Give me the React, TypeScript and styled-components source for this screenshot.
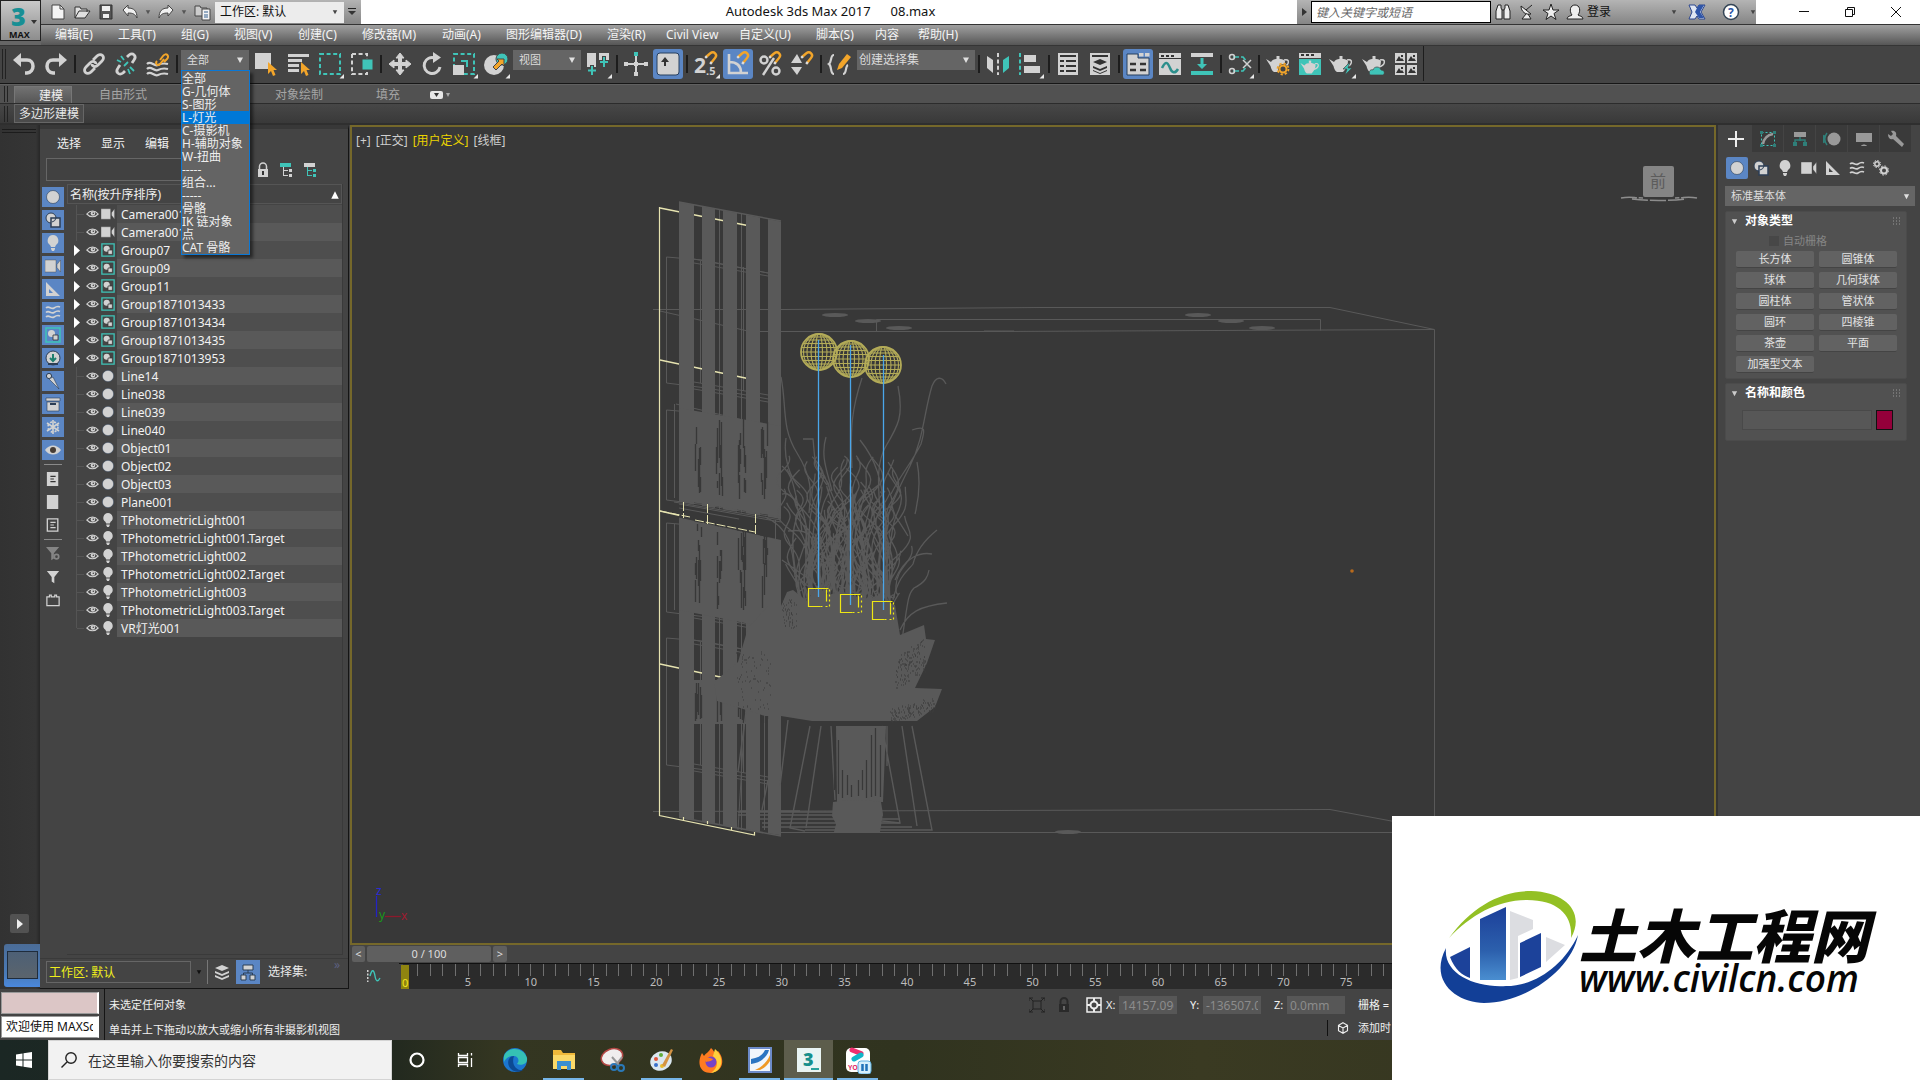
import React from "react";
import styled, { createGlobalStyle, css } from "styled-components";

const L = "#d2d2d2";
const T = "#3fc4b8";
const O = "#f2a52a";
const WIRE = "#595959";
const CREAM = "#e6e3b0";

const Global = createGlobalStyle`
  *, *::before, *::after { box-sizing: border-box; }
  html, body { margin: 0; padding: 0; }
  body {
    background: #444;
    color: #e8e8e8;
    font-family: "Noto Sans", "Noto Sans CJK SC", sans-serif;
    font-size: 12px;
    line-height: 16px;
    overflow: hidden;
  }
  button, input, select { font: inherit; color: inherit; margin: 0; padding: 0; border: 0; border-radius: 0; background: none; outline: none; }
  ul { list-style: none; margin: 0; padding: 0; }
  svg { display: block; flex: none; }
`;

const Page = styled.div`
  height: 100vh;
  display: flex;
  flex-direction: column;
  overflow: hidden;
  position: relative;
`;

/* ---------- window header ---------- */
const Header = styled.header`
  flex: none;
  display: grid;
  grid-template-columns: 41px 1fr;
  grid-template-rows: 24px 21px;
`;
const AppButton = styled.button`
  grid-row: 1 / 3;
  height: 41px;
  border: 1px solid #222;
  background: linear-gradient(#c9c9c9, #8d8d8d);
  z-index: 1;
`;
const TitleBar = styled.div`
  display: flex;
  background: #fff;
  color: #111;
`;
const QuickBar = styled.div`
  width: 320px;
  display: flex;
  align-items: center;
  padding-left: 5px;
  background: linear-gradient(#b4b4b4, #858585);
`;
const QuickButton = styled.button<{ $w?: number }>`
  width: ${(p) => p.$w ?? 24}px;
  height: 22px;
  display: grid;
  place-items: center;
`;
const TitleText = styled.h1`
  flex: 1;
  margin: 0;
  display: flex;
  justify-content: center;
  gap: 20px;
  padding-left: 3px;
  font-size: 13px;
  font-weight: 400;
  line-height: 22px;
`;
const InfoCenter = styled.div`
  width: 459px;
  display: flex;
  align-items: center;
  background: linear-gradient(#b4b4b4, #858585);
`;
const KeywordInput = styled.input`
  width: 180px;
  height: 22px;
  padding: 0 4px;
  border: 1px solid #000;
  background: #fff;
  font-style: italic;
  &::placeholder { color: #666; opacity: 1; }
`;
const SignIn = styled.button`
  width: 79px;
  text-align: left;
`;
const WindowButtons = styled.div`
  width: 164px;
  display: flex;
  padding-left: 25px;
`;
const WindowButton = styled.button`
  width: 46px;
  display: grid;
  place-items: center;
`;
const MenuBar = styled.nav`
  display: flex;
  align-items: center;
  padding-left: 14px;
  gap: 24px;
  border-top: 1px solid #333;
  background: linear-gradient(#a0a0a0, #565656);
  box-shadow: -41px 0 0 #666;
`;
const MenuButton = styled.button<{ $w: number }>`
  width: ${(p) => p.$w}px;
  height: 20px;
  text-align: left;
  white-space: nowrap;
  color: #f4f4f4;
`;

/* ---------- toolbars ---------- */
const Toolbar = styled.div`
  flex: none;
  height: 39px;
  display: flex;
  align-items: center;
  padding-bottom: 2px;
  background: #444;
  border-top: 1px solid #353535;
  border-bottom: 1px solid #161616;
`;
const Grip = styled.span`
  width: 4px;
  height: 30px;
  margin: 0 2px;
  border: solid #222;
  border-width: 0 1px;
`;
const ToolButton = styled.button<{ $on?: boolean }>`
  width: 30px;
  height: 30px;
  margin: 0 1px;
  border-radius: 3px;
  ${(p) => p.$on && css`background: #5b86c4;`}
`;
const Divider = styled.span`
  width: 2px;
  height: 18px;
  margin: 0 2px;
  background: #1d1d1d;
`;
const ToolbarEnd = styled.span`
  width: 1px;
  align-self: stretch;
  margin-left: 1px;
  background: #1d1d1d;
`;
const SelectWrap = styled.div<{ $w: number }>`
  width: ${(p) => p.$w}px;
  height: 20px;
  margin: 4px 1px 0 1px;
  align-self: flex-start;
  display: grid;
  grid-template-columns: 1fr 18px;
  align-items: center;
  position: relative;
  background: #656565;
  select {
    grid-area: 1 / 1 / 2 / 3;
    width: 100%;
    height: 20px;
    padding-left: 6px;
    appearance: none;
    font-size: 11px;
    color: #dcdcdc;
  }
  > svg { grid-area: 1 / 2; pointer-events: none; justify-self: center; }
`;
const FilterList = styled.ul`
  position: absolute;
  z-index: 5;
  top: 20px;
  left: 0;
  width: 69px;
  padding-top: 1px;
  border: 1px solid #0a78d6;
  background: #646464;
  box-shadow: 3px 3px 3px rgba(0, 0, 0, 0.5);
`;
const FilterOption = styled.li<{ $on?: boolean }>`
  height: 13px;
  line-height: 13px;
  white-space: nowrap;
  color: #eee;
  background: ${(p) => (p.$on ? "#0078d7" : "transparent")};
`;

const RibbonTabs = styled.div`
  flex: none;
  height: 20px;
  display: flex;
  align-items: flex-end;
  padding-left: 2px;
  background: #515151;
  border-top: 1px solid #606060;
  border-bottom: 1px solid #2c2c2c;
`;
const RibbonTab = styled.button<{ $on?: boolean; $w: number }>`
  width: ${(p) => p.$w}px;
  height: 17px;
  padding-top: 1px;
  line-height: 16px;
  color: ${(p) => (p.$on ? "#eee" : "#a5a5a5")};
  ${(p) => p.$on && css`
    padding-left: 16px;
    background: linear-gradient(#727272, #565656);
    border: solid #777;
    border-width: 1px 1px 0;
  `}
`;
const RibbonPanel = styled.div`
  flex: none;
  height: 19px;
  display: flex;
  padding-left: 2px;
  background: linear-gradient(#474747, #393939);
`;
const RibbonButton = styled.button`
  width: 70px;
  height: 19px;
  padding-top: 1px;
  line-height: 16px;
  border: 1px solid #666;
  background: #4b4b4b;
`;

/* ---------- work area ---------- */
const Work = styled.main`
  flex: 1;
  min-height: 0;
  display: grid;
  grid-template-columns: 40px 309px minmax(0, 1fr) 204px;
  padding-top: 2px;
  background: #2f2f2f;
`;
const Strip = styled.aside`
  display: flex;
  flex-direction: column;
  padding: 4px 0 2px;
  background: linear-gradient(90deg, #323232, #353535 90%, #272727);
`;
const StripGrip = styled.span`
  height: 4px;
  margin: 0 4px auto 2px;
  border: solid #1c1c1c;
  border-width: 1px 0;
`;
const StripPlay = styled.button`
  width: 19px;
  height: 19px;
  margin: 0 0 11px 10px;
  display: grid;
  place-items: center;
  border-radius: 2px;
  background: #525252;
`;
const LayoutTab = styled.button`
  width: 36px;
  height: 43px;
  margin-left: 4px;
  padding: 7px 2px 8px 3px;
  border-radius: 3px 0 0 3px;
  background: linear-gradient(#4b6c97, #4a7bb8 70%, #4a88dd);
  span { display: block; height: 100%; border: 1px solid #1f2c3c; background: linear-gradient(#4d6076, #5b646c); }
`;

const Explorer = styled.section`
  display: flex;
  flex-direction: column;
  min-height: 0;
  background: #444;
  border-top: 4px solid #383838;
  border-right: 1px solid #151515;
`;
const ExplorerMenu = styled.div`
  height: 29px;
  display: flex;
  align-items: center;
  gap: 20px;
  padding-left: 17px;
  button { color: #f0f0f0; }
`;
const ExplorerSearch = styled.div`
  height: 23px;
  display: flex;
  align-items: center;
  gap: 8px;
  padding-left: 6px;
  input { width: 199px; height: 23px; margin-right: 2px; padding: 0 4px; border: 1px solid #666; background: #414141; }
  button { width: 16px; height: 16px; }
`;
const ExplorerBody = styled.div`
  flex: 1;
  min-height: 0;
  display: flex;
  padding: 3px 5px 0 2px;
`;
const FilterColumn = styled.div`
  width: 25px;
  display: flex;
  flex-direction: column;
  gap: 3px;
  padding-top: 3px;
  hr { width: 18px; margin: 1px 0 1px 2px; border: 0; border-top: 1px solid #8a8a8a; }
`;
const FilterButton = styled.button<{ $on?: boolean }>`
  width: 22px;
  height: 20px;
  display: grid;
  place-items: center;
  background: ${(p) => (p.$on ? "#5b86c4" : "transparent")};
`;
const SceneTree = styled.div`
  flex: 1;
  min-width: 0;
  margin-bottom: 3px;
  border: solid #3a3a3a;
  border-width: 0 1px 1px 0;
`;
const TreeHeader = styled.button`
  width: 100%;
  height: 20px;
  margin-bottom: 1px;
  display: flex;
  align-items: center;
  justify-content: space-between;
  padding: 1px 1px 0 2px;
  border: 1px solid #555;
  color: #f0f0f0;
`;
const TreeRow = styled.li`
  height: 18px;
  display: grid;
  grid-template-columns: 19px 15px 16px 1fr;
  align-items: center;
  span { height: 18px; padding: 1px 0 0 4px; line-height: 17px; background: #4e4e4e; color: #f2f2f2; white-space: nowrap; }
  &:nth-child(even) span { background: #595959; }
`;
const ExplorerFoot = styled.div`
  height: 31px;
  display: flex;
  align-items: center;
  padding: 0 8px 4px 6px;
  border-top: 1px solid #3a3a3a;
  border-bottom: 1px solid #151515;
`;
const LayerCombo = styled.input`
  width: 145px;
  height: 22px;
  padding: 0 2px;
  border: 1px solid #666;
  color: #f0ee1c;
`;
const FootButton = styled.button<{ $w: number; $on?: boolean }>`
  width: ${(p) => p.$w}px;
  height: 24px;
  display: grid;
  place-items: center;
  background: ${(p) => (p.$on ? "#5b86c4" : "transparent")};
`;
const FootRule = styled.span`
  width: 1px;
  height: 24px;
  background: #777;
`;
const FootLabel = styled.span`
  margin-left: 8px;
`;
const FootMore = styled.span`
  margin-left: auto;
  align-self: flex-start;
  line-height: 12px;
  color: #5c6080;
`;

const Stage = styled.section`
  display: flex;
  flex-direction: column;
  min-width: 0;
  min-height: 0;
  padding-left: 1px;
  background: #444;
`;
const Viewport = styled.div`
  flex: 1;
  min-height: 0;
  display: grid;
  border: 2px solid #75682a;
  background: #383838;
  > * { grid-area: 1 / 1; min-height: 0; min-width: 0; }
  svg { width: 100%; height: 100%; }
`;
const ViewportLabels = styled.div`
  display: flex;
  gap: 5px;
  padding: 6px 4px;
  align-self: start;
  z-index: 1;
`;
const ViewLabel = styled.button<{ $gold?: boolean }>`
  height: 16px;
  color: ${(p) => (p.$gold ? "#ebd400" : "#cfcfcf")};
`;
const SliderRow = styled.div`
  height: 18px;
  display: flex;
  gap: 2px;
  padding: 1px 2px 0;
`;
const SliderButton = styled.button<{ $w: number }>`
  width: ${(p) => p.$w}px;
  height: 16px;
  line-height: 16px;
  border-radius: 2px;
  background: #5f5f5f;
  color: #ddd;
  font-size: 11px;
`;
const TrackRow = styled.div`
  height: 26px;
  display: grid;
  grid-template-columns: 49px 1fr;
  align-items: center;
  > svg { justify-self: center; }
`;
const Track = styled.div`
  height: 26px;
  display: flex;
  padding-right: 49px;
  border-top: 1px solid #111;
  background: linear-gradient(90deg, #444 4px, #2b2b2b 4px);
`;
const Frame = styled.div<{ $major?: boolean }>`
  flex: 1 1 0;
  min-width: 0;
  display: flex;
  flex-direction: column;
  align-items: center;
  color: #bdbdbd;
  font-size: 11px;
  line-height: 12px;
  &::before { content: ""; width: 1px; height: 12px; flex: none; background: #707070; }
`;
const FrameZero = styled.div`
  flex: 1 1 0;
  display: flex;
  justify-content: center;
  min-width: 0;
  span { width: 8px; height: 24px; margin-top: 1px; padding-top: 12px; background: #8f8410; color: #f2e620; font-size: 11px; line-height: 12px; text-align: center; }
`;

/* ---------- command panel ---------- */
const Command = styled.aside`
  display: flex;
  flex-direction: column;
  border-left: 2px solid #333;
  padding-left: 2px;
  background: #444;
`;
const CommandTabs = styled.div`
  height: 27px;
  display: flex;
`;
const CommandTab = styled.button<{ $on?: boolean }>`
  width: 32px;
  display: grid;
  place-items: center;
  border-right: 1px solid #444;
  background: ${(p) => (p.$on ? "#444" : "#3a3a3a")};
`;
const Categories = styled.div`
  display: flex;
  gap: 2px;
  padding: 5px 0 7px 6px;
`;
const CategoryButton = styled.button<{ $on?: boolean }>`
  width: 22px;
  height: 22px;
  display: grid;
  place-items: center;
  border-radius: 2px;
  background: ${(p) => (p.$on ? "#5b86c4" : "transparent")};
`;
const PanelSelect = styled(SelectWrap)`
  width: auto;
  margin: 0 5px 5px 5px;
  align-self: stretch;
`;
const Rollout = styled.section`
  margin: 0 13px 4px 5px;
  padding-bottom: 5px;
  border-radius: 2px;
  background: #515151;
  border: 1px solid #4b4b4b;
`;
const RolloutTitle = styled.h2`
  height: 18px;
  margin: 0;
  display: flex;
  align-items: center;
  gap: 7px;
  padding: 0 6px 0 5px;
  font-size: 12px;
  line-height: 18px;
  color: #fff;
  svg:last-child { margin-left: auto; }
`;
const AutoGrid = styled.label`
  height: 21px;
  display: flex;
  align-items: center;
  gap: 4px;
  padding-left: 43px;
  font-size: 11px;
  color: #858585;
  input { appearance: none; width: 10px; height: 10px; background: #474747; }
`;
const ObjectGrid = styled.div`
  display: grid;
  grid-template-columns: 1fr 1fr;
  gap: 4px 5px;
  padding: 0 9px 0 10px;
`;
const ObjectButton = styled.button`
  height: 17px;
  border-radius: 2px;
  border-bottom: 1px solid #444;
  background: #626262;
  font-size: 11px;
  line-height: 16px;
  color: #e2e2e2;
`;
const NameRow = styled.div`
  display: flex;
  gap: 4px;
  padding: 8px 13px 5px 16px;
  input { flex: 1; min-width: 0; height: 20px; padding: 0 4px; border: 1px solid #494949; background: #575757; }
  button { width: 17px; height: 20px; border: 1px solid #111; background: #94003a; }
`;

/* ---------- status bar ---------- */
const Status = styled.footer`
  flex: none;
  height: 51px;
  display: grid;
  grid-template-columns: 105px minmax(0, 1fr) 364px 528px;
  background: #444;
  font-size: 11px;
`;
const Listener = styled.div`
  display: flex;
  flex-direction: column;
  gap: 2px;
  padding: 3px 5px 2px 1px;
  border-right: 1px solid #151515;
  input { width: 98px; height: 22px; padding: 0 4px 2px; border: solid #999; border-width: 1px 2px 1px 1px; border-right-color: #fff; background: #dcc6c6; color: #111; font-size: 12px; }
  input + input { background: #fff; }
`;
const Prompts = styled.div`
  display: flex;
  flex-direction: column;
  gap: 9px;
  padding: 8px 0 0 4px;
  color: #f0f0f0;
`;
const Coords = styled.div`
  display: grid;
  grid-template-rows: 24px 16px;
  row-gap: 3px;
  padding-top: 4px;
`;
const CoordLine = styled.div`
  display: flex;
  align-items: center;
  white-space: nowrap;
  color: #f0f0f0;
`;
const CoordButton = styled.button<{ $w: number }>`
  width: ${(p) => p.$w}px;
  flex: none;
  height: 24px;
  display: grid;
  place-items: center;
`;
const CoordField = styled.label`
  flex: none;
  width: 84px;
  display: flex;
  align-items: center;
  gap: 4px;
  input { width: 58px; height: 18px; padding: 0 3px; background: #575757; color: #8c8c8c; font-size: 12px; }
  span { width: 9px; }
`;
const TimeTag = styled(CoordLine)`
  justify-content: flex-end;
  gap: 9px;
  padding-right: 1px;
  span:first-child { width: 1px; height: 16px; background: #111; }
`;

/* ---------- taskbar ---------- */
const Taskbar = styled.nav`
  flex: none;
  height: 40px;
  display: flex;
  background: linear-gradient(90deg, #1b2724 0, #22291f 392px, #343621 500px, #30331f 900px, #3a3a22 1200px, #2f321f);
`;
const StartButton = styled.button`
  width: 48px;
  display: grid;
  place-items: center;
`;
const TaskSearch = styled.label`
  width: 344px;
  display: flex;
  align-items: center;
  gap: 11px;
  padding-left: 12px;
  background: #f2f2f2;
  border: 1px solid #d4d4d4;
  input { flex: 1; min-width: 0; height: 24px; font-size: 14px; }
  input::placeholder { color: #333; opacity: 1; }
`;
const TaskButton = styled.button<{ $open?: boolean; $on?: boolean }>`
  width: 49px;
  height: 40px;
  display: grid;
  place-items: center;
  position: relative;
  background: ${(p) => (p.$on ? "#5d5d4c" : "transparent")};
  &::after {
    content: "";
    position: absolute;
    left: ${(p) => (p.$on ? 0 : 4)}px;
    right: ${(p) => (p.$on ? 0 : 4)}px;
    bottom: 0;
    height: 2px;
    background: ${(p) => (p.$open ? "#76b5e8" : "transparent")};
  }
`;

/* ---------- site mark over the corner ---------- */
const SiteMark = styled.a`
  position: absolute;
  right: 0;
  bottom: 0;
  z-index: 10;
  width: 528px;
  height: 264px;
  display: flex;
  align-items: center;
  padding: 0 0 2px 47px;
  background: #fff;
  color: #060606;
  text-decoration: none;
  white-space: nowrap;
`;
const SiteWords = styled.span`
  display: flex;
  flex-direction: column;
  padding-top: 8px;
  font-style: italic;
  strong { font-family: "Noto Sans CJK SC", sans-serif; font-size: 58px; line-height: 54px; font-weight: 900; }
  em { font-family: "Open Sans", "Noto Sans", sans-serif; font-size: 37px; line-height: 36px; font-weight: 600; }
`;

/* ---------- glyphs ---------- */
type GlyphProps = { s?: number; h?: number; vb?: string; children: React.ReactNode };
const G = ({ s = 30, h, vb = "-15 -15 30 30", children }: GlyphProps) => (
  <svg width={s} height={h ?? s} viewBox={vb} fill="none" aria-hidden="true">{children}</svg>
);
const Down = ({ c = "#e0e0e0", s = 8 }: { c?: string; s?: number }) => (
  <G s={s} vb="0 0 8 8"><path d="M1 1.5h6L4 7z" fill={c} /></G>
);
const Fly = () => <path d="M14 10v4.500H9.500z" fill="#e8e8e8" />;
const Cursor = ({ x = 0, y = 0 }) => (
  <path transform={`translate(${x} ${y})`} d="M0 0v12l3-3 2 5 2.500-1L5.500 8H9z" fill={O} />
);
const Magnet = ({ x = 0, y = 0 }) => (
  <g transform={`translate(${x} ${y})`}>
    <path d="M0 5l4-3.500c4-3 8 1 5 4.500L5 11" stroke={O} strokeWidth="2.400" />
    <path d="M-.8 5.800l1.700-1.500M4.200 12l1.500-2" stroke="#ddd" strokeWidth="2.400" />
  </g>
);
const Pot = ({ x = 0, y = 0, c = L }: { x?: number; y?: number; c?: string }) => (
  <g transform={`translate(${x} ${y})`}>
    <path d="M-12-5l5 3C-5-6 4-6 7-3c0 5-2 8-5 11h-6c-2-1-3-4-3.500-6z" fill={c} />
    <path d="M-1.500-8h3v3h-3z" fill={c} />
    <path d="M6-4c6-2 6 5-1 7" stroke={c} strokeWidth="1.500" />
  </g>
);

const tool: Record<string, React.ReactNode> = {
  undo: <g><path d="M-11-4l8-7v14z" fill={L} /><path d="M-5-4h8c8 0 8 12 0 13H1" stroke={L} strokeWidth="3.500" /></g>,
  redo: <g><path d="M11-4l-8-7v14z" fill={L} /><path d="M5-4h-8c-8 0-8 12 0 13h2" stroke={L} strokeWidth="3.500" /></g>,
  link: <g stroke={L} strokeWidth="2.800"><path d="M-1-4l4-4c4-4 9 1 5 5L4 1C1 4-2 2-2 0" /><path d="M1 4l-4 4c-4 4-9-1-5-5l4-4c3-3 6-1 6 1" /></g>,
  unlink: <g><g stroke={L} strokeWidth="2.800"><path d="M1-7l2-2c4-3 8 1 5 5L6-1" /><path d="M-1 7l-2 2c-4 3-8-1-5-5l2-3" /></g><path d="M-5-8l3 4M-9-4l4 2M8 7L4 3M4 10L2 5M-2 2l4-4" stroke={T} strokeWidth="1.800" /></g>,
  bind: <g><path d="M-11 0c4-4 7 3 11 1s6-2 10-1M-11 5c4-4 7 3 11 1s6-2 10-1M-11 10c4-4 7 3 11 1s6-2 10-1" stroke={L} strokeWidth="2.200" /><path d="M2-4l3-4c3-4 7 0 4 3L6-2M6-5L2 0c-3 3-5-1-3-3" stroke={O} strokeWidth="2" /></g>,
  pick: <g><path d="M-11-11H5V5h-16z" fill={L} /><Cursor x={2} y={-2} /></g>,
  byName: <g><path d="M-10-10h21v3h-21zM-10-5h14v3h-14zM-10 0h11v3h-11zM-10 5h11v3h-11z" fill={L} /><Cursor x={3} y={-2} /></g>,
  region: <g><rect x="-10" y="-10" width="20" height="20" stroke={T} strokeWidth="2" strokeDasharray="4 2.600" /><Fly /></g>,
  windowSel: <g><rect x="-10" y="-10" width="15" height="20" stroke={L} strokeWidth="2" strokeDasharray="4 2.600" /><path d="M0-5h11V6H0z" fill={T} stroke="#444" /></g>,
  move: <path d="M0-11l4 5H1.500v4.500H6V-4l5 4-5 4V1.500H1.500V6H4l-4 5-4-5h2.500V1.500H-6V4l-5-4 5-4v2.500h4.500V-6H-4z" fill={L} stroke={L} />,
  rotate: <g><path d="M3-6A8 8 0 1 0 8 3" stroke={L} strokeWidth="3" /><path d="M1-12l8 5.500-8 5.500z" fill={L} /></g>,
  scale: <g><rect x="-10" y="-10" width="20" height="20" stroke={T} strokeWidth="2" strokeDasharray="4 2.600" /><path d="M-11 1H0v10h-11z" fill={L} /><path d="M-3-3h6v6" stroke={T} strokeWidth="2" /><Fly /></g>,
  place: <g><circle cx="-2" cy="1" r="10" fill={L} /><circle cx="6" cy="-5" r="6" fill={T} stroke="#444" /><path d="M-3 3l6-6-2-2h7v7l-2-2-6 6z" fill={O} stroke="#444" /><Fly /></g>,
  pivot: <g><path d="M-11-11H-2V3h-9zM1-11h10V0H1z" fill={L} /><path d="M-6 1v10M-11 6h10M6-8V5M1-2h10" stroke="#444" strokeWidth="4" /><path d="M-6 2v9M-10 6.500h8M6-7V3M2-2h8" stroke={T} strokeWidth="2" /><Fly /></g>,
  manip: <g><path d="M0-10V10M-10 0H10" stroke={L} strokeWidth="2" /><path d="M-2-12h4v4h-4z" fill={T} /><path d="M-12-2h4v4h-4zM8-2h4v4H8zM-2 8h4v4h-4zM-2-2h4v4h-4z" fill={L} /></g>,
  keys: <g><rect x="-11" y="-11" width="22" height="22" rx="3" fill={L} stroke="#29405f" /><path d="M-4 2v-4h-3l4-5 4 5h-3v4z" fill="#333" /></g>,
  snap: <g><text x="-12" y="9" fill={L} fontSize="21" fontWeight="700" fontFamily="Open Sans">2</text><text x="0" y="11" fill={L} fontSize="11" fontWeight="700" fontFamily="Open Sans">.5</text><Magnet x={0} y={-12} /><Fly /></g>,
  angle: <g><path d="M-9-10V9H10M-9-2C0-2 3 3 3 9" stroke={L} strokeWidth="2.600" /><Magnet x={0} y={-12} /></g>,
  percent: <g stroke={L} strokeWidth="2.400"><circle cx="-6" cy="-4" r="3.500" /><circle cx="6" cy="7" r="3.500" /><path d="M4-6L-7 11" /><Magnet x={0} y={-12} /></g>,
  spinner: <g><path d="M-11-1l6-9 5 9zM-11 3H0l-5 8z" fill={L} /><Magnet x={0} y={-12} /></g>,
  sets: <g><path d="M-6-9c-4 0-2 7-5 9 3 2 1 10 5 10M3 10c4 0 2-8 5-9" stroke={L} strokeWidth="2.200" /><path d="M-3 6l2-6L7-10l4 3L2 4z" fill={O} /></g>,
  mirror: <g><path d="M-11-8l6 4V9l-6-5z" fill={L} /><path d="M11-8L5-4V9l6-5z" fill={T} /><path d="M0-11V11" stroke={L} strokeWidth="2" strokeDasharray="4 2.400" /></g>,
  align: <g><path d="M-10-11V11" stroke={T} strokeWidth="2" strokeDasharray="4 2.400" /><path d="M-6-9H6v7H-6zM-6 2H10v7H-6z" fill={L} /><Fly /></g>,
  layers: <g><path d="M-10-11h20v22h-20z" fill={L} /><path d="M-8-8H8M-8-3h4M-2-3H8M-8 2h4M-2 2H8M-8 7h4M-2 7H8" stroke="#333" strokeWidth="2.200" /></g>,
  stack: <g><path d="M-10-11h20v22h-20z" fill={L} /><path d="M-8-8H8" stroke="#333" strokeWidth="2" /><path d="M0-5l7 3-7 3-7-3zM-7 2l7 3 7-3v2L0 7l-7-3zM-7 6l7 3 7-3v1l-7 3-7-3z" fill="#333" /></g>,
  ribbon: <g><path d="M-11-10H0v4h11v17h-22z" fill={L} stroke="#29405f" /><path d="M1-11h4.500v3.500H1zM7-11h4.500v3.500H7z" fill={L} /><path d="M-8 0h6M2 0h6M-8 6h6M2 6h6" stroke="#333" strokeWidth="2.500" /></g>,
  curve: <g><path d="M-11-11h22v22h-22z" fill={L} /><path d="M-9-9h3v2h-3zM-4-9h3v2h-3zM1-9h3v2H1zM-11-6h22v1h-22z" fill="#333" /><path d="M-8 4c4-8 6-5 8 0s5 6 8 1" stroke="#2c8f8c" strokeWidth="2.500" /></g>,
  schematic: <g><path d="M-11-11h22v4h-22z" fill={L} /><path d="M-11 7h22v4h-22zM-1.500-6h3v6H5l-5 5-5-5h3.500z" fill={T} /></g>,
  material: <g><path d="M-7-7H3l4 5M-7 7H3l4-5" stroke={T} strokeWidth="1.600" strokeDasharray="6 2" /><circle cx="-8" cy="-7" r="2.500" stroke={L} strokeWidth="1.500" /><circle cx="-8" cy="7" r="2.500" stroke={L} strokeWidth="1.500" /><path d="M3-4l8 8M11-4L3 4" stroke={L} strokeWidth="1.500" /><Fly /></g>,
  renderSetup: <g><Pot /><circle cx="5" cy="5" r="5" fill="#444" /><circle cx="5" cy="5" r="3.500" stroke={O} strokeWidth="2" /><circle cx="5" cy="5" r="5.500" stroke={O} strokeWidth="1.800" strokeDasharray="2.300 2" /></g>,
  frameWin: <g><path d="M-11-11h22v5h-22z" fill={L} /><path d="M-11-5h22v16h-22z" fill={T} /><path d="M-9-10h3v2h-3zM-4-10h3v2h-3zM1-10h3v2H1z" fill="#333" /><g transform="translate(0 3) scale(.8)"><Pot /></g></g>,
  render: <g><Pot x={-1} /><path d="M8-2L1 5h4l-2 6 7-7H6z" fill={T} stroke="#444" strokeWidth=".7" /><Fly /></g>,
  cloud: <g><Pot /><path d="M-4 11c-2-4 1-6 3-5 1-4 7-4 8 0 4 0 4 4 2 5z" fill={T} stroke="#444" strokeWidth=".7" /></g>,
  gallery: <g>{[[-11, -11], [1, -11], [-11, 1], [1, 1]].map(([x, y]) => <g key={`${x}${y}`} transform={`translate(${x} ${y})`}><path d="M0 0h10v10H0z" fill={L} /><path d="M1 8l3-5 2 3 1-1 2 3zM6 2h2v2H6z" fill="#333" /></g>)}</g>,
};

const Tool = ({ id, label, on }: { id: string; label: string; on?: boolean }) => (
  <ToolButton $on={on} aria-label={label}><G>{tool[id]}</G></ToolButton>
);

const D = "#2c3e55";
const cat: Record<string, React.ReactNode> = {
  geo: <circle cx="8" cy="8" r="6.500" fill={L} stroke={D} strokeWidth=".6" />,
  shape: <g><circle cx="6" cy="6" r="5" fill={L} stroke={D} /><path d="M6 6h9v9H6z" fill={L} stroke={D} strokeWidth="1.500" /><path d="M7 10a5 5 0 0 0 4-4" stroke={D} /></g>,
  light: <path d="M8 0a5.500 5.500 0 0 1 3 10l-1 2H6l-1-2A5.500 5.500 0 0 1 8 0zM6 13h4v1l-1 2H7l-1-2z" fill={L} />,
  camera: <path d="M0 2h11v12H0zM12 6.500L15.500 2v12L12 9.500z" fill={L} stroke="#444" strokeWidth=".4" />,
  helper: <path fillRule="evenodd" d="M1 1l14 14H1zM4 8v4h4z" fill={L} />,
  warp: <path d="M1 4c3-3 5 2 8 0s4-2 6-1M1 8.500c3-3 5 2 8 0s4-2 6-1M1 13c3-3 5 2 8 0s4-2 6-1" stroke={L} strokeWidth="1.600" />,
  group: <g><path d="M1 1h14v14H1z" stroke={T} strokeWidth="1.500" /><circle cx="6.500" cy="6.500" r="3.500" fill={L} /><path d="M8 8h5v5H8z" fill={L} stroke="#333" strokeWidth=".8" /></g>,
  xref: <g><circle cx="8" cy="8" r="7" fill={L} stroke={D} /><path d="M8 4v6M5 8l3 3 3-3" stroke="#1f7f6e" strokeWidth="2" /><path d="M3 14h10" stroke={D} strokeWidth="2" /></g>,
  bone: <g><circle cx="4" cy="3" r="2.600" fill={L} stroke={D} /><path d="M4 6l4-2 6 12z" fill={L} stroke={D} strokeWidth=".6" /></g>,
  box: <g><path d="M1 2h14v3H1zM2 6h12v9H2z" fill={L} stroke={D} strokeWidth=".6" /><path d="M5 8h6" stroke={D} strokeWidth="2" /></g>,
  frozen: <g stroke={L} strokeWidth="1.600"><path d="M8 1v14M2 4l12 8M14 4L2 12" /><circle cx="8" cy="8" r="5" strokeDasharray="2 2" /></g>,
  hidden: <g><path d="M0 8c4-6 12-6 16 0-4 6-12 6-16 0z" fill={L} /><circle cx="8" cy="8" r="3" fill="#463c35" /></g>,
  all: <g><path d="M1 0h13v16H1z" fill={L} /><path d="M5 5h6M5 8h4M5 11h6" stroke="#333" strokeWidth="1.300" /></g>,
  none: <path d="M1 0h13v16H1z" fill={L} />,
  invert: <g><path d="M1.500 1h12v14h-12z" stroke={L} strokeWidth="1.500" /><path d="M5 5h6M5 8h4M5 11h6" stroke={L} strokeWidth="1.300" /></g>,
  funnelOff: <g><path d="M0 0h15l-6 7v6l-3 2V7z" fill="#858585" /><circle cx="12" cy="11" r="2.500" stroke="#858585" strokeWidth="2" /></g>,
  funnel: <path d="M1 1h14L9.500 8v7l-3-2V8z" fill={L} />,
  custom: <path d="M1 4.500H4v-2h2v2h4v-2h2v2h3v10H1z" stroke={L} strokeWidth="1.400" />,
  gears: <g stroke={L}><circle cx="4" cy="4" r="2.200" strokeWidth="1.500" /><circle cx="4" cy="4" r="3.600" strokeDasharray="1.500 1.300" /><circle cx="11" cy="10.500" r="3" strokeWidth="2" /><circle cx="11" cy="10.500" r="4.600" strokeDasharray="1.800 1.800" /></g>,
};
const Cat = ({ id, s = 16 }: { id: string; s?: number }) => <G s={s} vb="0 0 16 16">{cat[id]}</G>;
const Eye = () => (
  <G s={13} h={14} vb="0 0 16 16"><path d="M1 8c4-5 10-5 14 0-4 4.500-10 4.500-14 0z" stroke={L} strokeWidth="1.400" /><circle cx="8.500" cy="7.500" r="2.800" fill={L} /><circle cx="9" cy="7" r="1" fill="#444" /></G>
);

/* ---------- data ---------- */
const menus: [string, number][] = [["编辑(E)", 39], ["工具(T)", 39], ["组(G)", 29], ["视图(V)", 40], ["创建(C)", 40], ["修改器(M)", 56], ["动画(A)", 40], ["图形编辑器(D)", 77], ["渲染(R)", 35], ["Civil View", 49], ["自定义(U)", 53], ["脚本(S)", 35], ["内容", 19], ["帮助(H)", 40]];
const filters = ["全部", "G-几何体", "S-图形", "L-灯光", "C-摄影机", "H-辅助对象", "W-扭曲", "-----", "组合...", "-----", "骨骼", "IK 链对象", "点", "CAT 骨骼"];
const nodes: [string, string][] = [
  ["camera", "Camera001"], ["camera", "Camera001"],
  ...["07", "09", "11", "1871013433", "1871013434", "1871013435", "1871013953"].map((n): [string, string] => ["group", `Group${n}`]),
  ...["Line14", "Line038", "Line039", "Line040", "Object01", "Object02", "Object03", "Plane001"].map((n): [string, string] => ["geo", n]),
  ...["001", "001.Target", "002", "002.Target", "003", "003.Target"].map((n): [string, string] => ["light", `TPhotometricLight${n}`]),
  ["light", "VR灯光001"],
];
const catFilters = ["geo", "shape", "light", "camera", "helper", "warp", "group", "xref", "bone", "box", "frozen", "hidden"];
const objectTypes = ["长方体", "圆锥体", "球体", "几何球体", "圆柱体", "管状体", "圆环", "四棱锥", "茶壶", "平面", "加强型文本"];

/* ---------- wireframe scene ---------- */
function rng(seed: number) {
  let s = seed;
  return () => {
    s = (s * 16807) % 2147483647;
    return s / 2147483647;
  };
}
const twigs = (() => {
  const r = rng(77);
  const out: string[] = [];
  for (let i = 0; i < 120; i++) {
    const x0 = 803 + r() * 90;
    const top = 455 + r() * 110;
    const x1 = x0 + (r() - 0.5) * 50;
    const k = () => (r() - 0.5) * 38;
    out.push(`M${x0} 606C${x0 + k()} 580 ${x0 + k()} ${top + 60} ${(x0 + x1) / 2 + k() / 2} ${top + 40}S${x1 + k()} ${top + 15} ${x1} ${top}`);
  }
  return out.join("");
})();
const slats = [[679, 694], [702, 715], [723, 737], [746, 760], [768, 781]];
/* broken dark lines in the spaces between the slats */
const streaks = (() => {
  const r = rng(31);
  const out: string[] = [];
  const gaps = [[695, 701], [716, 722], [738, 745], [761, 767]];
  const bands = [[418, 500], [524, 612], [680, 724]];
  for (let i = 0; i < 150; i++) {
    const g = gaps[Math.floor(r() * 4)];
    const x = Math.floor(g[0] + r() * (g[1] - g[0] + 1)) + 0.5;
    const b = bands[Math.floor(r() * 3)];
    const len = 6 + r() * 26;
    const y = b[0] + r() * (b[1] - b[0] - len);
    out.push(`M${x} ${y.toFixed(0)}v${len.toFixed(0)}`);
  }
  return out.join("");
})();
const specks = (() => {
  const r = rng(9);
  const out: string[] = [];
  for (let i = 0; i < 300; i++) {
    const t = r();
    const low = r() > 0.5;
    const x = low ? 890 + t * 45 : 895 + t * 30;
    const y = low ? 716 - t * 12 + (r() - 0.5) * 14 : 672 - t * 16 + (r() - 0.5) * 34;
    out.push(`M${x.toFixed(0)} ${y.toFixed(0)}h1`);
  }
  for (let i = 0; i < 60; i++) out.push(`M${(782 + r() * 14).toFixed(0)} ${(600 + r() * 28).toFixed(0)}h1`);
  for (let i = 0; i < 80; i++) out.push(`M${(736 + r() * 34).toFixed(0)} ${(650 + r() * 60).toFixed(0)}h1`);
  return out.join("");
})();
const topAt = (x: number) => 202 + (x - 679) * 0.19;
const botAt = (x: number) => 818 + (x - 679) * 0.17;

const Bulb = ({ x, y }: { x: number; y: number }) => (
  <g stroke="#b3ab58" strokeWidth="1.100">
    <circle cx={x} cy={y} r="18" strokeWidth="1.800" />
    {[3.5, 8, 12, 15.500].map((rx) => <ellipse key={rx} cx={x} cy={y} rx={rx} ry="18" />)}
    {[-15, -12, -8.500, -4.500, 0, 4.500, 8.500, 12, 15].map((dy) => {
      const w = Math.sqrt(324 - dy * dy);
      return <path key={dy} d={`M${x - w} ${y + dy}h${2 * w}`} />;
    })}
  </g>
);
const Target = ({ x, y }: { x: number; y: number }) => (
  <g stroke="#eee614" strokeWidth="1.200">
    <path d={`M${x + 12} ${y + 18}h-12v-18h20M${x + 18} ${y + 1}v12`} />
    <path d={`M${x + 21} ${y + 1}v18M${x + 12} ${y + 18}h9`} strokeDasharray="2 3" />
  </g>
);

const Scene = () => (
  <svg viewBox="352 127 1362 816" preserveAspectRatio="xMidYMid meet" fill="none" aria-label="线框视图">
    <g stroke={WIRE}>
      <path d="M653 309.500H783L1040 307.500 1330 307.500 1434.500 329.500V832.500H780M653 811.500L1330 809.500 1434 829M660 311l90 20.500H1000L1434 329.500" />
      <path d="M876.500 331.500v-12H1320.500v11M984 331h30" />
    </g>
    <g fill={WIRE}>
      {[[835, 315], [868, 321], [899, 328], [1198, 315], [1231, 321], [1262, 328], [1068, 832]].map(([x, y]) => <ellipse key={x} cx={x} cy={y} rx="13" ry="2" />)}
    </g>
    <g stroke={WIRE}>
      {[[257, 383], [410, 500], [523, 612], [638, 765]].map(([a, b]) => (
        <g key={a}>
          <path d={`M768 ${a + 16}L702 ${a + 3} 666.500 ${a}V${b}l40 5 62 11`} />
          <path d={`M694 ${a + 2}l74 14M694 ${a + 6}l74 13M694 ${b - 1}l74 13M694 ${b + 6}l74 13M700.500 ${a + 4}V${b}M743.500 ${a + 10}V${b + 8}`} />
        </g>
      ))}
      <path d="M674.500 404v94M674.500 524v86M676 404l92 22M719.500 209v616M741.500 214v616M764.500 560V830M762 430L738 830" />
    </g>
    <path d="M660 208l90 18M660 360l90 19M660 511l97 22M660 664l65 14" stroke={CREAM} strokeWidth="1.300" />
    <g fill={WIRE}>
      {slats.map(([a, b]) => <path key={a} d={`M${a} ${topAt(a)}L${b} ${topAt(b)}V${botAt(b)}L${a} ${botAt(a)}z`} />)}
      <path d="M679 408L781 426V517L679 500zM679 518L781 540V630L679 610zM690 680h60v44h-60z" />
    </g>
    <path d="M679 202l102 19M683 818l98 18" stroke={WIRE} strokeWidth="1.500" />
    <path d={streaks} stroke="#383838" strokeWidth="1.300" />
    <path d="M679 502L781 519V540L679 517.500z" fill="#383838" />
    <path d="M674 502l107 18M679 504l102 18M679 508l60 11M775.500 520v20" stroke={WIRE} />
    <path d="M683.500 502v16M707.500 504v20M755.500 514v20M660 511l30 6M695 520l60 12" stroke={CREAM} strokeDasharray="9 2" />
    <path d="M659.500 207V815.500l95 19.500v-3M683.500 817v3M707.500 821v3M731.500 827v3" stroke={CREAM} strokeWidth="1.200" />

    <g stroke={WIRE} strokeWidth="1.300">
      <path d={twigs} />
      <path d="M781 377c6 30 0 50 16 76s14 40 12 60M862 378c-10 30-12 50-10 90M898 386c6 30 0 40-12 60s-6 50-6 70M946 384c-4-8-10-8-14 2-8 26-8 52-22 80s-22 44-26 68M912 430c16-6 12 2 9 14-10 20-20 30-30 50M803 439h10c2 18 0 28 14 46M826 437c-6 20 2 36 6 54M860 440c16 20 22 40 24 70M917 462c4 20 1 40-2 52M786 438c-3 20 4 40 14 50M782 466c10 8 12 20 16 40M782 494c14-4 18 20 20 38M765 517c24 10 28 30 30 60M782 560l34 24M788 531c30-4 24 14 32 40M893 600c6-26 16-30 20-36 4-16 14-26 24-34M895 580c10-24 26-28 37-26M902 640c6-40 6-46 12-52 12-6 14-12 15-18M900 630c8-18 20-24 47-27M908 536c-12-20-12-16-16-30" />
    </g>
    <path d="M781 606l6-14 6-2 14 11 8-12 14 6 12-4 14 6 20 2 20 6 5 30 24-10 2 14 9 1-8 23-12 25 27 1-7 18-18 14H812l-31-5h-16l-28-9-20-6-3-19 24-20 10-34 20-22z" fill={WIRE} />
    <path d={specks} stroke="#3d3d3d" />
    <g stroke={WIRE} strokeWidth="1.400">
      <path d="M788 720l-8 66M810 726l-20 102 15 3M821 726l-15 102M831 726l4 74M746 712l-8 60M768 780l-6 30M882 726l18 97-18-2M902 726l15 100M912 726l20 104H805M876 726l4 74M887 726v40" />
      <path d="M738 812h140M738 815h145M750 819h150M762 823h138M762 827h150M740 811h60" />
    </g>
    <path d="M836 726h50l-3 76h-46z" fill={WIRE} />
    <path d="M834.500 740v50M838.500 740v54M842.500 770v28M871.500 735v62M875.500 728v68M880.500 745v52M847.500 775v20M866.500 760v38M851.500 785v12M858.500 780v16M862.500 770v20" stroke="#383838" strokeWidth="1.200" />
    <path d="M833 802q25-4 48 0l2 12-3 18h-46l2-8-4-8z" fill={WIRE} />

    <Bulb x={819} y={352} /><Bulb x={851} y={359} /><Bulb x={883} y={365} />
    <path d="M818.500 340V597M850.500 345V605M883.500 355V610" stroke="#4aa6ea" strokeWidth="1.300" />
    <Target x={808.5} y={588.5} /><Target x={840.5} y={594.5} /><Target x={872.5} y={601.5} />
    <circle cx="1352" cy="571" r="1.800" fill="#b86a1c" />

    <g>
      <path d="M1621 198c10-2 12 0 22 0M1697 198c-10-2-12 0-22 0M1632 199c16 2 38 2 54 0" stroke="#8d8d8d" strokeWidth="1.500" strokeDasharray="16 2" />
      <rect x="1643" y="166" width="31" height="31" rx="2" fill="#858585" />
      <text x="1650" y="187" fontSize="16" fill="#5c5c5c" fontFamily="Noto Sans CJK SC">前</text>
    </g>
    <g strokeWidth="1.300" fontFamily="Noto Sans" fontSize="12">
      <path d="M376.500 917V896" stroke="#2424c4" />
      <path d="M385 916.500h16" stroke="#8c1a2c" />
      <text x="376" y="895" fill="#2a2ad8">z</text>
      <text x="379" y="919" fill="#1a9a1a">y</text>
      <text x="401" y="920" fill="#a01c30">x</text>
    </g>
  </svg>
);

const WorkspaceSelect = styled(SelectWrap).attrs({ $w: 129 })`
  height: 21px;
  margin: 0;
  align-self: center;
  background: #ececec;
  select { height: 21px; padding-left: 5px; font-size: 12px; color: #111; }
`;
const QuickTools = () => (
  <QuickBar>
    <QuickButton aria-label="新建"><G s={18} vb="0 0 18 18"><path d="M3 2h8l4 4v10H3z" fill="#f4f4f4" stroke="#444" /><path d="M11 2v4h4" stroke="#444" /></G></QuickButton>
    <QuickButton aria-label="打开"><G s={18} vb="0 0 18 18"><path d="M2 15V4h5l1 2h6v3M2 15l4-7h11l-5 7z" stroke="#333" fill="#e0e0e0" /></G></QuickButton>
    <QuickButton aria-label="保存"><G s={18} vb="0 0 18 18"><path d="M3 2h12v14H3z" fill="#555" stroke="#333" /><path d="M5 3h8v5H5zM6 11h6v4H6z" fill="#eee" /></G></QuickButton>
    <QuickButton aria-label="撤消"><G s={18} vb="0 0 18 18"><path d="M2 7l5-5v3c6 0 9 3 9 10-2-4-4-5-9-5v3z" fill="#f0f0f0" stroke="#444" /></G></QuickButton>
    <QuickButton aria-label="撤消列表" $w={12}><Down c="#555" s={6} /></QuickButton>
    <QuickButton aria-label="重做"><G s={18} vb="0 0 18 18"><path d="M16 7l-5-5v3C5 5 2 8 2 15c2-4 4-5 9-5v3z" fill="#f0f0f0" stroke="#444" /></G></QuickButton>
    <QuickButton aria-label="重做列表" $w={12}><Down c="#555" s={6} /></QuickButton>
    <QuickButton aria-label="项目文件夹" $w={25}><G s={18} vb="0 0 18 18"><path d="M1 3h5l1 2h6v8H1z" fill="#ccc" stroke="#444" /><path d="M8 6h8v11H8z" fill="#f4f4f4" stroke="#444" /><path d="M10 9h4M10 12h4M10 14h4" stroke="#35618f" /></G></QuickButton>
    <WorkspaceSelect>
      <select aria-label="工作区" defaultValue="d"><option value="d">工作区: 默认</option></select>
      <Down c="#444" s={6} />
    </WorkspaceSelect>
    <QuickButton aria-label="自定义工具栏" $w={16}><G s={8} vb="0 0 8 8"><path d="M0 .5h8" stroke="#222" /><path d="M0 3h8L4 7z" fill="#333" /></G></QuickButton>
  </QuickBar>
);

const TaskIcon = ({ id }: { id: string }) => {
  const art: Record<string, React.ReactNode> = {
    cortana: <circle cx="14" cy="14" r="6.500" stroke="#fff" strokeWidth="2.200" />,
    tasks: <path d="M6.500 7v2.500h9V7M6.500 21v-2.500h9V21M6.500 11.500h9v5h-9zM19.500 7v2.500M19.500 12v9" stroke="#fff" strokeWidth="1.300" />,
    edge: <g><circle cx="14" cy="14" r="12" fill="#1b76cf" /><path d="M3 10C6 1 22 0 26 12c1 6-6 8-10 6 3-3 1-8-3-8-5 0-8 2-10 6z" fill="#35c1b4" /><path d="M13 10c-6 0-8 8-3 13 3 3 8 4 12 1-7 1-12-6-9-14z" fill="#0c4a94" /></g>,
    files: <g><path d="M3 4h8l2 3h12v16H3z" fill="#f0b93a" /><path d="M3 9h22v14H3z" fill="#fbd968" /><path d="M7 24v-9h14v9h-4v-4h-6v4z" fill="#3a8fd0" /></g>,
    snip: <g><ellipse cx="13" cy="11" rx="11" ry="8" fill="#f0eeee" stroke="#b34744" transform="rotate(-20 13 11)" strokeWidth="1.500" /><path d="M13 11l7 8M23 11l-6 8" stroke="#999" strokeWidth="2" /><circle cx="15" cy="21" r="3" stroke="#2b79b8" strokeWidth="2" /><circle cx="22" cy="22" r="3" stroke="#2b79b8" strokeWidth="2" /></g>,
    paint: <g><ellipse cx="13" cy="15" rx="11" ry="9.500" fill="#dbe7f0" transform="rotate(-25 13 15)" /><circle cx="8" cy="13" r="2" fill="#e0533a" /><circle cx="13" cy="9" r="2" fill="#60ac38" /><circle cx="8" cy="19" r="2" fill="#3970cc" /><circle cx="14" cy="20" r="2" fill="#e8bb2c" /><path d="M14 19L23 3l2 1-8 17z" fill="#d49343" /></g>,
    firefox: <g><path d="M14 2c2 2 3 3 4 6l3-3c7 8 6 20-7 22C2 27 0 16 5 7l2 3c2-3 5-4 7-8z" fill="#ff7b20" /><path d="M18 3c9 7 9 22-4 24 8-6 7-12 2-17z" fill="#ffd03c" /><circle cx="14" cy="16" r="5.500" fill="#7444c8" /><path d="M7 12c3-2 6 0 9 1-2 3-5 2-7 3z" fill="#ff7b20" /></g>,
    cad: <g><path d="M3 2h22v24H3z" fill="#f1f6fb" stroke="#6c8bc8" strokeWidth="2" /><path d="M5 13c7-1 12-4 14-9h4C21 12 13 17 5 18z" fill="#2b75c2" /><path d="M9 24c7-3 12-8 15-15v6c-3 5-7 8-10 9z" fill="#ef9a26" /></g>,
    max: <g><path d="M2 2h24v24H2z" fill="#e9f4f3" /><text x="8" y="20" fontSize="18" fontWeight="800" fill="#178f8b" fontFamily="Open Sans">3</text><path d="M16 22h8v2h-8z" fill="#2aa19c" /></g>,
    video: <g><rect x="2" y="2" width="24" height="24" rx="5" fill="#fff" /><path d="M8 4l9 3.500" stroke="#ef2f6f" strokeWidth="5" strokeLinecap="round" /><path d="M17 9l-7 4" stroke="#12b5c8" strokeWidth="5" strokeLinecap="round" /><text x="4" y="24" fontSize="7" fontWeight="700" fill="#e2306c" fontFamily="Open Sans">YO</text><rect x="14" y="15" width="13" height="13" rx="3" fill="#d6effc" stroke="#5faede" /><path d="M18.500 18v7M22.500 18v7" stroke="#2072b8" strokeWidth="2.500" /></g>,
  };
  return <G s={28} vb="0 0 28 28">{art[id]}</G>;
};

const Grip16 = styled(Grip)`
  height: 16px;
  margin-right: 6px;
  align-self: center;
`;
const NamedSets = styled(SelectWrap).attrs({ $w: 118 })`
  select { font-size: 12px; padding-left: 2px; }
`;
const Dots = () => (
  <G s={8} vb="0 0 8 8"><path d="M1 1h7M1 4h7M1 7h7" stroke="#999" strokeDasharray="1 2" /></G>
);

export default function App() {
  return (
    <Page>
      <Global />
      <Header>
        <AppButton aria-label="应用程序菜单">
          <G s={38} vb="0 0 38 38">
            <text x="10" y="24" fontSize="25" fontWeight="800" fill="#178f94" fontFamily="Open Sans">3</text>
            <text x="8" y="36" fontSize="9" fontWeight="700" fill="#111" fontFamily="Open Sans">MAX</text>
            <path d="M30 18h6l-3 4z" fill="#333" />
          </G>
        </AppButton>
        <TitleBar>
          <QuickTools />
          <TitleText><span>Autodesk 3ds Max 2017</span><span>08.max</span></TitleText>
          <InfoCenter>
            <QuickButton aria-label="折叠" $w={14}><G s={8} vb="0 0 8 8"><path d="M2 0l5 4-5 4z" fill="#333" /></G></QuickButton>
            <KeywordInput aria-label="搜索" placeholder="键入关键字或短语" />
            <QuickButton aria-label="查找"><G s={18} vb="0 0 18 18"><path d="M4 2h3v3l1 2v9H2V8zM14 2h-3v3l-1 2v9h6V8zM8 7h2" fill="#eee" stroke="#222" /></G></QuickButton>
            <QuickButton aria-label="通讯中心"><G s={18} vb="0 0 18 18"><path d="M3 3c0 6 5 9 10 8zM8 7l6-5M8 11l-4 5h9l-3-5" fill="#eee" stroke="#222" /></G></QuickButton>
            <QuickButton aria-label="收藏夹"><G s={18} vb="0 0 18 18"><path d="M9 1l2 6h6l-5 3.500 2 6L9 13l-5 3.500 2-6L1 7h6z" fill="#eee" stroke="#222" /></G></QuickButton>
            <QuickButton aria-label="用户"><G s={18} vb="0 0 18 18"><path d="M1 16c0-3 4-3 5-4-3-4-2-10 3-10s6 6 3 10c1 1 5 1 5 4z" fill="#eee" stroke="#222" /></G></QuickButton>
            <SignIn>登录</SignIn>
            <QuickButton aria-label="登录选项" $w={16}><Down c="#444" s={6} /></QuickButton>
            <QuickButton aria-label="Exchange" $w={30}><G s={18} vb="0 0 18 18"><path d="M1 2h6l2 3 2-3h6l-4 7 4 7h-6l-2-3-2 3H1l3-7z" fill="#dfe6f2" stroke="#2b4690" /><path d="M9 5l2-3h5l-4 7 4 6h-5l-4-6z" fill="#2f55a8" /></G></QuickButton>
            <QuickButton aria-label="帮助" $w={38}><G s={18} vb="0 0 18 18"><circle cx="9" cy="9" r="7.500" fill="#fff" stroke="#345" strokeWidth="1.500" /><text x="6" y="13.500" fontSize="12" fontWeight="700" fill="#2b56a8">?</text></G></QuickButton>
            <Down c="#444" s={6} />
          </InfoCenter>
          <WindowButtons>
            <WindowButton aria-label="最小化"><G s={12} vb="0 0 12 12"><path d="M1 5.500h10" stroke="#111" /></G></WindowButton>
            <WindowButton aria-label="还原"><G s={12} vb="0 0 12 12"><path d="M1.500 3.500h7v7h-7zM3.500 3V1.500h7v7H9" stroke="#111" /></G></WindowButton>
            <WindowButton aria-label="关闭"><G s={12} vb="0 0 12 12"><path d="M1 1l10 10M11 1L1 11" stroke="#111" /></G></WindowButton>
          </WindowButtons>
        </TitleBar>
        <MenuBar>{menus.map(([m, w]) => <MenuButton key={m} $w={w}>{m}</MenuButton>)}</MenuBar>
      </Header>

      <Toolbar>
        <Grip />
        <Tool id="undo" label="撤消" /><Tool id="redo" label="重做" /><Divider />
        <Tool id="link" label="链接" /><Tool id="unlink" label="断开链接" /><Tool id="bind" label="绑定到空间扭曲" /><Divider />
        <SelectWrap $w={68}>
          <select aria-label="选择过滤器" defaultValue="全部"><option>全部</option></select>
          <Down />
          <FilterList role="listbox" aria-label="选择过滤器列表">
            {filters.map((f, i) => <FilterOption key={i} role="option" aria-selected={i === 3} $on={i === 3}>{f}</FilterOption>)}
          </FilterList>
        </SelectWrap>
        <Tool id="pick" label="选择对象" /><Tool id="byName" label="按名称选择" /><Tool id="region" label="选择区域" /><Tool id="windowSel" label="窗口/交叉" /><Divider />
        <Tool id="move" label="移动" /><Tool id="rotate" label="旋转" /><Tool id="scale" label="缩放" /><Tool id="place" label="放置" />
        <SelectWrap $w={68}>
          <select aria-label="参考坐标系" defaultValue="视图"><option>视图</option></select>
          <Down />
        </SelectWrap>
        <Tool id="pivot" label="使用轴点中心" /><Divider />
        <Tool id="manip" label="选择并操纵" /><Tool id="keys" label="键盘快捷键覆盖" on /><Divider />
        <Tool id="snap" label="捕捉开关" /><Tool id="angle" label="角度捕捉" on /><Tool id="percent" label="百分比捕捉" /><Tool id="spinner" label="微调器捕捉" /><Divider />
        <Tool id="sets" label="编辑命名选择集" />
        <NamedSets>
          <select aria-label="命名选择集" defaultValue="c"><option value="c">创建选择集</option></select>
          <Down />
        </NamedSets>
        <Divider />
        <Tool id="mirror" label="镜像" /><Tool id="align" label="对齐" /><Divider />
        <Tool id="layers" label="场景资源管理器" /><Tool id="stack" label="层资源管理器" /><Divider />
        <Tool id="ribbon" label="功能区" on /><Tool id="curve" label="曲线编辑器" /><Tool id="schematic" label="图解视图" /><Divider />
        <Tool id="material" label="材质编辑器" /><Divider />
        <Tool id="renderSetup" label="渲染设置" /><Tool id="frameWin" label="渲染帧窗口" /><Tool id="render" label="渲染" /><Tool id="cloud" label="云渲染" /><Tool id="gallery" label="渲染库" />
        <ToolbarEnd />
      </Toolbar>

      <RibbonTabs>
        <Grip16 />
        <RibbonTab $on $w={58}>建模</RibbonTab>
        <RibbonTab $w={102}>自由形式</RibbonTab>
        <RibbonTab $w={74} aria-label="选择" />
        <RibbonTab $w={102}>对象绘制</RibbonTab>
        <RibbonTab $w={76}>填充</RibbonTab>
        <RibbonTab $w={40} aria-label="功能区显示">
          <G s={24} h={12} vb="0 0 24 12"><rect x="4" y="2" width="13" height="8" rx="2" fill="#e6e6e6" /><path d="M8 4h5l-2.500 4z" fill="#333" /><path d="M20 4h4l-2 4z" fill="#aaa" /></G>
        </RibbonTab>
      </RibbonTabs>
      <RibbonPanel>
        <Grip16 />
        <RibbonButton>多边形建模</RibbonButton>
      </RibbonPanel>

      <Work>
        <Strip>
          <StripGrip />
          <StripPlay aria-label="展开视口布局"><G s={8} h={10} vb="0 0 8 10"><path d="M1 0l6 5-6 5z" fill="#eee" /></G></StripPlay>
          <LayoutTab aria-label="视口布局"><span /></LayoutTab>
        </Strip>

        <Explorer>
          <ExplorerMenu><button>选择</button><button>显示</button><button>编辑</button></ExplorerMenu>
          <ExplorerSearch>
            <input aria-label="查找对象" />
            <button aria-label="锁定"><G s={16} vb="0 0 16 16"><path d="M4.500 7V4.500a3.500 3.500 0 0 1 7 0V7" stroke={L} strokeWidth="1.500" /><path d="M3 7h10v8H3z" fill={L} /><path d="M8 9v4" stroke="#333" strokeWidth="2" /></G></button>
            <button aria-label="按层排序"><G s={16} vb="0 0 16 16"><path d="M1 1h11v4H1z" fill={T} /><path d="M4.500 5v9M5 8.500h4M5 13.500h4" stroke={L} /><path d="M10 7h3v3h-3zM10 12h3v3h-3z" fill={L} /></G></button>
            <button aria-label="按层次排序"><G s={16} vb="0 0 16 16"><path d="M1 1h11v4H1z" fill={L} /><path d="M4.500 5v9M5 8.500h4M5 13.500h4" stroke={T} /><path d="M10 7h3v3h-3zM10 12h3v3h-3z" fill={T} /></G></button>
          </ExplorerSearch>
          <ExplorerBody>
            <FilterColumn>
              {catFilters.map((c) => <FilterButton key={c} $on aria-label={c}><Cat id={c} /></FilterButton>)}
              <hr />
              {["all", "none", "invert"].map((c) => <FilterButton key={c} aria-label={c}><Cat id={c} s={14} /></FilterButton>)}
              <hr />
              {["funnelOff", "funnel", "custom"].map((c) => <FilterButton key={c} aria-label={c}><Cat id={c} s={14} /></FilterButton>)}
            </FilterColumn>
            <SceneTree>
              <TreeHeader>名称(按升序排序)<G s={10} vb="0 0 8 8"><path d="M1 7h6L4 1z" fill="#fff" /></G></TreeHeader>
              <ul>
                {nodes.map(([type, name], i) => (
                  <TreeRow key={i}>
                    <G s={19} h={18} vb="0 0 19 18">
                      {type === "group" ? <path d="M7 4l6 5.500-6 5.500z" fill="#fff" /> : <path d={`M9.500 0v${i === nodes.length - 1 ? 9 : 18}M10 9.500h7`} stroke="#545454" />}
                    </G>
                    <Eye />
                    <Cat id={type} s={14} />
                    <span>{name}</span>
                  </TreeRow>
                ))}
              </ul>
            </SceneTree>
          </ExplorerBody>
          <ExplorerFoot>
            <LayerCombo aria-label="当前工作区" defaultValue="工作区: 默认" />
            <FootButton $w={16} aria-label="工作区列表"><Down c="#111" s={6} /></FootButton>
            <FootRule />
            <FootButton $w={28} aria-label="层"><G s={16} vb="0 0 16 16"><path d="M8 1l7 3-7 3-7-3zM1 7l7 3 7-3v2l-7 3-7-3zM1 11l7 3 7-3v2l-7 3-7-3z" fill={L} /></G></FootButton>
            <FootButton $w={24} $on aria-label="层次"><G s={18} vb="0 0 18 18"><path d="M4 2h10v5H4zM2 12h5v5H2zM11 12h5v5h-5z" fill={L} stroke={D} /><path d="M9 7v3M4.500 12v-2h9v2" stroke={D} /></G></FootButton>
            <FootLabel>选择集:</FootLabel>
            <FootMore>»</FootMore>
          </ExplorerFoot>
        </Explorer>

        <Stage>
          <Viewport>
            <ViewportLabels>
              <ViewLabel>[+]</ViewLabel><ViewLabel>[正交]</ViewLabel><ViewLabel $gold>[用户定义]</ViewLabel><ViewLabel>[线框]</ViewLabel>
            </ViewportLabels>
            <Scene />
          </Viewport>
          <SliderRow>
            <SliderButton $w={13} aria-label="上一帧">&lt;</SliderButton>
            <SliderButton $w={124}>0 / 100</SliderButton>
            <SliderButton $w={14} aria-label="下一帧">&gt;</SliderButton>
          </SliderRow>
          <TrackRow>
            <G s={16} vb="0 0 16 16"><path d="M0 2v12" stroke={L} strokeWidth="3" strokeDasharray="2 1.500" /><path d="M3 8c2-8 4-6 5 0s3 6 5 2" stroke={T} strokeWidth="1.400" /></G>
            <Track>
              {Array.from({ length: 101 }, (_, i) => i === 0
                ? <FrameZero key={i}><span>0</span></FrameZero>
                : <Frame key={i}>{i % 5 === 0 && i < 80 ? i : null}</Frame>)}
            </Track>
          </TrackRow>
        </Stage>

        <Command>
          <CommandTabs>
            <CommandTab $on aria-label="创建"><G s={18} vb="0 0 18 18"><path d="M9 1v16M1 9h16" stroke="#eee" strokeWidth="2" /></G></CommandTab>
            <CommandTab aria-label="修改"><G s={18} vb="0 0 18 18"><path d="M2.500 2.500h13v13h-13z" stroke={T} strokeDasharray="2 2" /><path d="M1 1h3v3H1zM14 1h3v3h-3zM1 14h3v3H1zM14 14h3v3h-3z" fill="#2f7f79" /><path d="M4 14C5 8 8 5 14 4" stroke="#999" strokeWidth="2.500" /></G></CommandTab>
            <CommandTab aria-label="层次"><G s={18} vb="0 0 18 18"><path d="M3 2h12v5H3z" fill="#999" /><path d="M9 7v4M4 13v-3h10v3" stroke="#2f7f79" strokeWidth="1.500" /><path d="M2 12h4v4H2zM12 12h4v4h-4z" fill="#2f7f79" /></G></CommandTab>
            <CommandTab aria-label="运动"><G s={18} vb="0 0 18 18"><circle cx="11" cy="9" r="6.500" fill="#999" /><path d="M4 3c-3 4-3 8 0 12M1 5c-1 3-1 5 0 8" stroke="#2f7f79" strokeWidth="1.500" /></G></CommandTab>
            <CommandTab aria-label="显示"><G s={18} vb="0 0 18 18"><path d="M1 3h16v9H1zM6 16c1-2 5-2 6 0z" fill="#999" /></G></CommandTab>
            <CommandTab aria-label="实用程序"><G s={18} vb="0 0 18 18"><path d="M1 4l3 2 2-2-2-3c4-1 6 2 5 5l8 8-2 3-9-8C3 10 1 8 1 4z" fill="#999" /></G></CommandTab>
          </CommandTabs>
          <Categories>
            {["geo", "shape", "light", "camera", "helper", "warp", "gears"].map((c, i) => <CategoryButton key={c} $on={i === 0} aria-label={c}><Cat id={c} /></CategoryButton>)}
          </Categories>
          <PanelSelect $w={190}>
            <select aria-label="对象类别" defaultValue="s"><option value="s">标准基本体</option></select>
            <Down s={7} />
          </PanelSelect>
          <Rollout>
            <RolloutTitle><Down s={7} c="#ccc" />对象类型<Dots /></RolloutTitle>
            <AutoGrid><input type="checkbox" disabled />自动栅格</AutoGrid>
            <ObjectGrid>{objectTypes.map((o) => <ObjectButton key={o}>{o}</ObjectButton>)}</ObjectGrid>
          </Rollout>
          <Rollout>
            <RolloutTitle><Down s={7} c="#ccc" />名称和颜色<Dots /></RolloutTitle>
            <NameRow><input aria-label="对象名称" /><button aria-label="对象颜色" /></NameRow>
          </Rollout>
        </Command>
      </Work>

      <Status>
        <Listener>
          <input aria-label="宏录制器" />
          <input aria-label="侦听器" defaultValue="欢迎使用 MAXScript" />
        </Listener>
        <Prompts><span>未选定任何对象</span><span>单击并上下拖动以放大或缩小所有非摄影机视图</span></Prompts>
        <Coords>
          <CoordLine>
            <CoordButton $w={18} aria-label="孤立当前选择"><G s={16} vb="0 0 16 16"><path d="M4 4h8v8H4zM0 4V1h4M12 1h4v3M16 12v3h-4M4 15H0v-3M1 1l3 3M15 1l-3 3M1 15l3-3M15 15l-3-3" stroke="#222" /></G></CoordButton>
            <CoordButton $w={36} aria-label="选择锁定"><G s={16} vb="0 0 16 16"><path d="M4.500 7V4.500a3.500 3.500 0 0 1 7 0V7" stroke="#2a2a2a" strokeWidth="2" /><path d="M3 7h10v8H3z" fill="#2a2a2a" /><path d="M8 9v4" stroke="#666" strokeWidth="2" /></G></CoordButton>
            <CoordButton $w={24} aria-label="绝对模式变换"><G s={16} vb="0 0 16 16"><path d="M1 1h14v14H1z" stroke="#eee" strokeWidth="1.500" /><circle cx="8" cy="8" r="3.500" stroke="#eee" strokeWidth="2" /><path d="M8 1v3M8 12v3M1 8h3M12 8h3" stroke="#eee" strokeWidth="2" /></G></CoordButton>
            <CoordField><span>X:</span><input defaultValue="14157.096mm" /></CoordField>
            <CoordField><span>Y:</span><input defaultValue="-136507.07mm" /></CoordField>
            <CoordField><span>Z:</span><input defaultValue="0.0mm" /></CoordField>
            <span>栅格 =</span>
          </CoordLine>
          <TimeTag>
            <span />
            <G s={12} vb="0 0 16 16"><path d="M8 1l6 3.500v7L8 15l-6-3.500v-7zM2 4.500L8 8l6-3.500M8 8v7" stroke="#eee" strokeWidth="1.500" /></G>
            <span>添加时</span>
          </TimeTag>
        </Coords>
      </Status>

      <Taskbar>
        <StartButton aria-label="开始"><G s={16} vb="0 0 16 16"><path d="M0 2.500L6.500 1.500V7.500H0zM7.500 1.300L16 0v7.500H7.500zM0 8.500h6.500v6L0 13.500zM7.500 8.500H16V16l-8.500-1.300z" fill="#fff" /></G></StartButton>
        <TaskSearch>
          <G s={16} vb="0 0 16 16"><circle cx="10" cy="6" r="5.200" stroke="#222" strokeWidth="1.400" /><path d="M6 10l-5.500 5.500" stroke="#222" strokeWidth="1.400" /></G>
          <input aria-label="搜索 Windows" placeholder="在这里输入你要搜索的内容" />
        </TaskSearch>
        <TaskButton aria-label="Cortana"><TaskIcon id="cortana" /></TaskButton>
        <TaskButton aria-label="任务视图"><TaskIcon id="tasks" /></TaskButton>
        <TaskButton aria-label="Edge"><TaskIcon id="edge" /></TaskButton>
        <TaskButton $open aria-label="文件资源管理器"><TaskIcon id="files" /></TaskButton>
        <TaskButton aria-label="截图工具"><TaskIcon id="snip" /></TaskButton>
        <TaskButton $open aria-label="画图"><TaskIcon id="paint" /></TaskButton>
        <TaskButton aria-label="Firefox"><TaskIcon id="firefox" /></TaskButton>
        <TaskButton $open aria-label="图像查看器"><TaskIcon id="cad" /></TaskButton>
        <TaskButton $open $on aria-label="3ds Max"><TaskIcon id="max" /></TaskButton>
        <TaskButton $open aria-label="录屏"><TaskIcon id="video" /></TaskButton>
      </Taskbar>

      <SiteMark href="#civilcn">
        <G s={140} h={114} vb="0 0 140 114">
          <defs>
            <linearGradient id="tower" x1="0" y1="0" x2="0" y2="1"><stop offset="0" stopColor="#1c3f99" /><stop offset=".6" stopColor="#2c60ad" /><stop offset="1" stopColor="#4a8ed0" /></linearGradient>
          </defs>
          <path d="M10 48C32 18 60 1 92 1c36 1 54 22 40 47 2-22-12-38-44-38C58 10 32 25 10 48z" fill="#93c024" />
          <path d="M7 58c-18 34 12 55 38 55 42 0 88-34 94-68-14 30-42 51-72 51C36 98 4 84 7 58z" fill="#123f97" />
          <path d="M71 21l23 9v9L79 46v42l-8 2zM107 47l19 8-19 17z" fill="#dcdde1" />
          <path d="M41 29l26-12v73H41z" fill="url(#tower)" />
          <path d="M81 53l21-10v34l-21 10zM11 67l20-10v31c-8-3-15-8-20-21z" fill="#1c429a" />
        </G>
        <SiteWords><strong>土木工程网</strong><em>www.civilcn.com</em></SiteWords>
      </SiteMark>
    </Page>
  );
}
